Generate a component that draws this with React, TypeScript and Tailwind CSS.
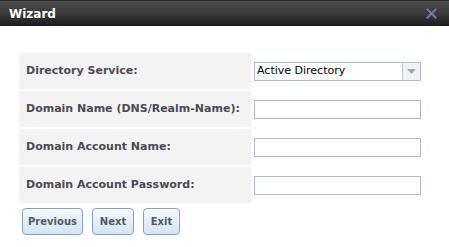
import React from "react";

const rows = [
  { label: "Directory Service:", kind: "select" },
  { label: "Domain Name (DNS/Realm-Name):", kind: "text" },
  { label: "Domain Account Name:", kind: "text" },
  { label: "Domain Account Password:", kind: "password" },
];

const CloseIcon = () => (
  <svg width="11" height="11" viewBox="0 0 11 11">
    <path d="M1.5 1.5 L9.5 9.5 M9.5 1.5 L1.5 9.5" stroke="#333a46" strokeWidth="3.6" strokeLinecap="square" />
    <path d="M1.5 1.5 L9.5 9.5 M9.5 1.5 L1.5 9.5" stroke="#717b8c" strokeWidth="2" strokeLinecap="square" />
  </svg>
);

const WizardButton = ({ children, width }: { children: React.ReactNode; width: string }) => (
  <button
    className={`${width} h-[27px] rounded-[4px] border border-[#7fa3cc] bg-gradient-to-b from-[#f4f8fd] to-[#d5e4f4] text-[10px] font-bold text-[#555a66] shadow-[inset_0_1px_0_#ffffff]`}
  >
    {children}
  </button>
);

export default function App() {
  return (
    <div
      className="w-[449px] h-[247px] bg-white overflow-hidden"
      style={{ fontFamily: '"DejaVu Sans", Verdana, sans-serif' }}
    >
      <div className="h-[26px] flex items-center justify-between pl-[9px] pr-[12px] bg-gradient-to-b from-[#4b4b4b] via-[#3a3a3a] to-[#1c1c1c] border-t border-[#2a2a2a]">
        <span className="text-[12px] font-bold text-white leading-none">Wizard</span>
        <CloseIcon />
      </div>

      <div className="pt-[27px] pl-[19px] flex flex-col gap-[2px]">
        {rows.map((row) => (
          <div key={row.label} className="flex h-[36px]">
            <div className="w-[232px] shrink-0 whitespace-nowrap bg-[#f3f3f3] flex items-center pl-[7px] text-[11px] font-bold text-[#4b4b57]">
              {row.label}
            </div>
            <div className="flex items-center pl-[3px]">
              {row.kind === "select" ? (
                <div className="w-[167px] h-[19px] border border-[#b3bacb] flex bg-white">
                  <div className="flex-1 flex items-center pl-[2px] text-[11px] text-black">Active Directory</div>
                  <div className="w-[18px] border-l border-[#c4c9d4] bg-[#f2f2f2] flex items-center justify-center">
                    <svg width="9" height="5" viewBox="0 0 9 5">
                      <path d="M0 0 H9 L4.5 5 Z" fill="#8fa8cc" />
                    </svg>
                  </div>
                </div>
              ) : (
                <input
                  type={row.kind}
                  className="w-[167px] h-[19px] border border-[#b3bacb] bg-white outline-none"
                />
              )}
            </div>
          </div>
        ))}

        <div className="flex gap-[9px] pt-[3px] pl-[3px]">
          <WizardButton width="w-[61px]">Previous</WizardButton>
          <WizardButton width="w-[42px]">Next</WizardButton>
          <WizardButton width="w-[37px]">Exit</WizardButton>
        </div>
      </div>
    </div>
  );
}
